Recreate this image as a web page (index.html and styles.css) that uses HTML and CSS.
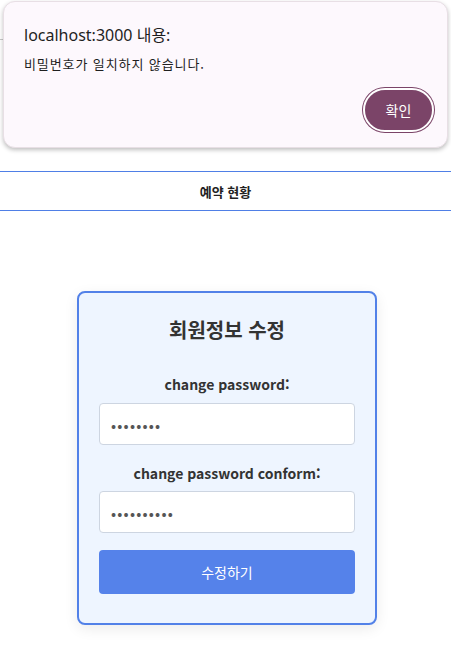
FILE: index.html
```html
<!DOCTYPE html>
<html lang="ko">
<head>
<meta charset="utf-8">
<title>회원정보 수정</title>
<link rel="stylesheet" href="styles.css">
</head>
<body>
<nav class="topnav"><div class="topnav-line"></div></nav>
<div class="tabbar">예약 현황</div>
<main class="main">
  <form class="card">
    <h2 class="card-title">회원정보 수정</h2>
    <label class="field-label">change password:</label>
    <input class="field-input" type="password" value="12345678">
    <label class="field-label second">change password conform:</label>
    <input class="field-input" type="password" value="1234567890">
    <button class="submit" type="button">수정하기</button>
  </form>
</main>
<div class="alert">
  <div class="alert-title">localhost:3000 내용:</div>
  <div class="alert-msg">비밀번호가 일치하지 않습니다.</div>
  <div class="alert-actions">
    <button class="alert-btn" type="button">확인</button>
  </div>
</div>
</body>
</html>
```
FILE: styles.css
```css
* { box-sizing: border-box; }
html, body { margin: 0; padding: 0; background: #ffffff; }
body {
  font-family: "Noto Sans CJK KR", "Noto Sans", sans-serif;
  color: #333;
  position: relative;
  width: 451px;
  height: 659px;
  overflow: hidden;
}
.topnav {
  height: 40px;
  display: flex;
  align-items: flex-end;
}
.topnav-line {
  width: 120px;
  height: 1px;
  background: #c8c8c8;
}
.tabbar {
  margin-top: 131px;
  height: 40px;
  border-top: 1px solid #4f7fe6;
  border-bottom: 1px solid #4f7fe6;
  display: flex;
  align-items: center;
  justify-content: center;
  font-size: 13px;
  font-weight: 700;
  color: #222;
}
.main {
  padding-top: 80px;
  display: flex;
  justify-content: center;
  padding-left: 3px;
}
.card {
  width: 300px;
  border: 2px solid #5281e8;
  border-radius: 8px;
  background: #eef5ff;
  padding: 23px 20px 29px;
  display: flex;
  flex-direction: column;
  box-shadow: 0 4px 14px rgba(0, 0, 0, 0.08);
}
.card-title {
  margin: 0 0 30px;
  font-size: 20px;
  line-height: 28px;
  font-weight: 700;
  text-align: center;
  color: #333;
}
.field-label {
  font-size: 14px;
  line-height: 20px;
  font-weight: 700;
  text-align: center;
  color: #333;
  margin-bottom: 9px;
}
.field-label.second { margin-top: 18px; margin-bottom: 8px; }
.field-input {
  width: 256px;
  height: 42px;
  border: 1px solid #cdd5e1;
  border-radius: 4px;
  background: #fff;
  padding: 0 11px;
  font-size: 15px;
  letter-spacing: 1.2px;
  color: #555;
  font-family: "Noto Sans CJK KR", sans-serif;
  outline: none;
}
.submit {
  margin-top: 17px;
  height: 44px;
  border: none;
  border-radius: 4px;
  background: #5582ea;
  color: #fff;
  font-size: 14px;
  font-family: "Noto Sans CJK KR", sans-serif;
}
.alert {
  position: absolute;
  left: 3px;
  top: 1px;
  width: 445px;
  height: 147px;
  background: #fdf8fd;
  border: 1px solid #e8dfe5;
  border-radius: 12px;
  box-shadow: 0 2px 4px rgba(0, 0, 0, 0.25);
  padding: 21px 13px 0 20px;
}
.alert-title {
  font-family: "Noto Sans", "Noto Sans CJK KR", sans-serif;
  font-size: 16px;
  line-height: 24px;
  color: #1f1f1f;
}
.alert-msg {
  margin-top: 8px;
  font-family: "Noto Sans CJK KR", sans-serif;
  font-size: 13px;
  letter-spacing: 0.9px;
  line-height: 18px;
  color: #1f1f1f;
}
.alert-actions {
  display: flex;
  justify-content: flex-end;
  margin-top: 15px;
}
.alert-btn {
  width: 71px;
  height: 44px;
  border-radius: 22px;
  background: #7b4468;
  border: 2px solid #fff;
  box-shadow: 0 0 0 1px #7b4468;
  color: #fff;
  font-size: 14px;
  font-family: "Noto Sans CJK KR", sans-serif;
}
```
